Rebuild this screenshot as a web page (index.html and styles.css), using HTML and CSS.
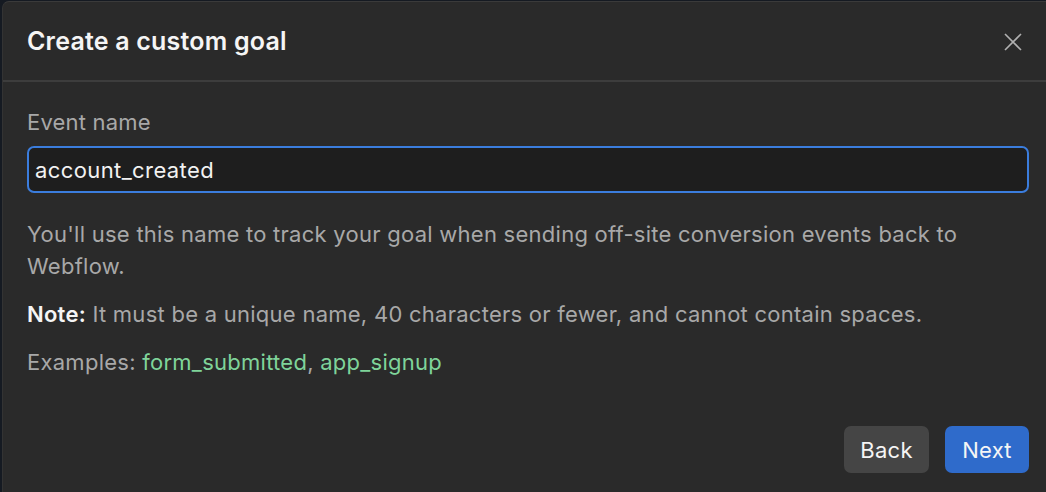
FILE: index.html
```html
<!DOCTYPE html>
<html>
<head>
<meta charset="utf-8">
<link rel="stylesheet" href="styles.css">
</head>
<body>
<div class="dialog">
  <div class="header">
    <h1 class="title">Create a custom goal</h1>
    <button class="close" aria-label="Close">
      <svg width="18" height="18" viewBox="0 0 18 18"><path d="M1 1L17 17M17 1L1 17" stroke="#b0b0b0" stroke-width="1.6" fill="none"/></svg>
    </button>
  </div>
  <div class="body">
    <label class="label">Event name</label>
    <div class="input">account_created</div>
    <p class="text">You'll use this name to track your goal when sending off-site conversion events back to Webflow.</p>
    <p class="text"><strong>Note:</strong> It must be a unique name, 40 characters or fewer, and cannot contain spaces.</p>
    <p class="text last">Examples: <span class="green">form_submitted</span>, <span class="green">app_signup</span></p>
  </div>
  <div class="footer">
    <button class="btn btn-back">Back</button>
    <button class="btn btn-next">Next</button>
  </div>
</div>
</body>
</html>
```
FILE: styles.css
```css
html, body {
  margin: 0;
  padding: 0;
  height: 100%;
  background: #151a22;
  overflow: hidden;
}
body {
  font-family: Inter, "Noto Sans", sans-serif;
  padding: 1px 0 0 2px;
  box-sizing: border-box;
}
.dialog {
  background: #2a2a2a;
  border-top: 1px solid #3a3a3a;
  border-left: 1px solid #333;
  border-radius: 7px 0 0 0;
  height: 100%;
  box-sizing: border-box;
}
.header {
  height: 78px;
  display: flex;
  align-items: center;
  justify-content: space-between;
  padding: 0 24px 0 24px;
  border-bottom: 2px solid #3d3d3d;
}
.title {
  margin: 0;
  font-size: 25px;
  font-weight: 600;
  color: #f5f5f5;
  letter-spacing: 0.2px;
}
.close {
  background: none;
  border: 0;
  padding: 0;
  width: 18px;
  height: 18px;
  display: flex;
  margin-top: 1px;
}
.body {
  padding: 27px 17px 0 24px;
}
.label {
  display: block;
  font-size: 22px;
  line-height: 26px;
  letter-spacing: 0.2px;
  color: #a8a8a8;
  margin-bottom: 11px;
}
.input {
  height: 47px;
  box-sizing: border-box;
  border: 2px solid #3b7ddd;
  border-radius: 7px;
  background: #1e1e1e;
  color: #f2f2f2;
  font-size: 22px;
  letter-spacing: 0.4px;
  display: flex;
  align-items: center;
  padding: 0 6px;
  margin-bottom: 25px;
}
.text {
  margin: 0 0 16px;
  font-size: 22px;
  line-height: 32px;
  letter-spacing: 0.26px;
  color: #a8a8a8;
}
.text.last {
  margin-bottom: 0;
}
.text strong {
  color: #f5f5f5;
  font-weight: 600;
}
.green {
  color: #7fd49a;
}
.footer {
  display: flex;
  justify-content: flex-end;
  gap: 16px;
  padding: 48px 17px 0 0;
}
.btn {
  height: 47px;
  border: 0;
  border-radius: 7px;
  font-family: Inter, "Noto Sans", sans-serif;
  font-size: 22px;
  letter-spacing: 0.3px;
  color: #f5f5f5;
  padding: 0;
}
.btn-back {
  background: #454545;
  width: 85px;
}
.btn-next {
  background: #2f6bcb;
  width: 84px;
}
```
